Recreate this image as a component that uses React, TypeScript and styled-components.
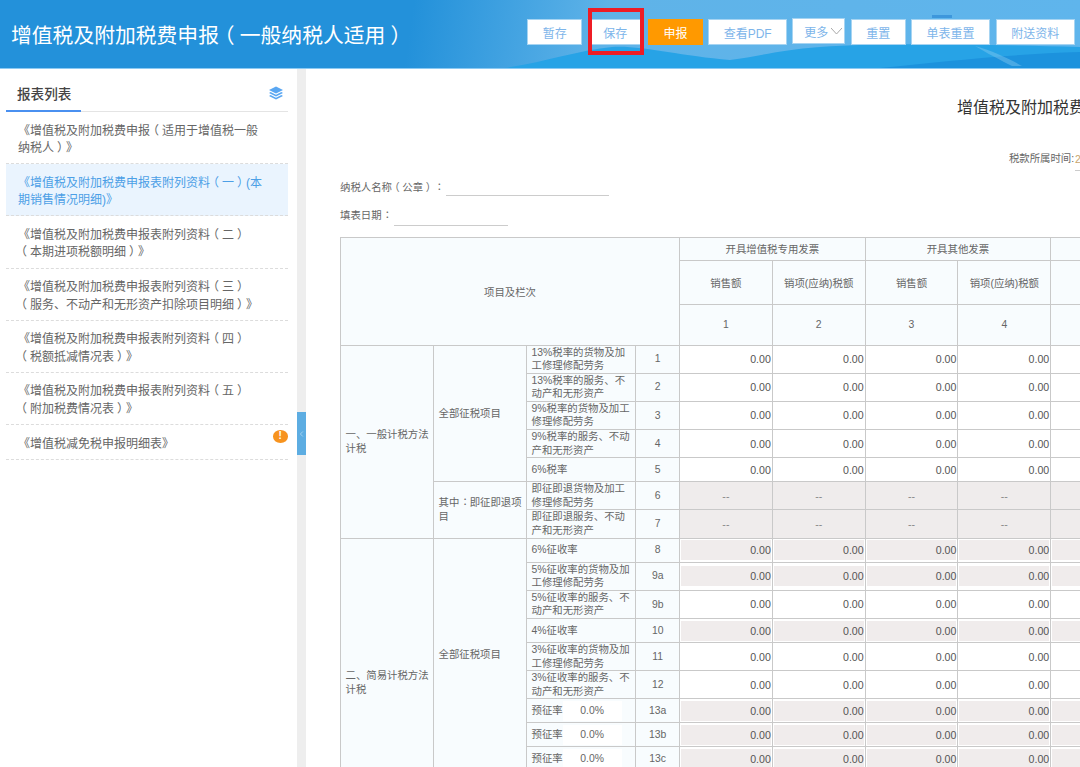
import React from 'react'
import styled, { createGlobalStyle } from 'styled-components'
import { ChevronLeft } from 'lucide-react'

const GlobalStyle = createGlobalStyle`
  html, body {
    margin: 0;
    padding: 0;
    height: 100%;
    overflow: hidden;
    background: #fff;
    font-family: "Liberation Sans", "Noto Sans CJK SC", sans-serif;
    text-spacing-trim: space-all;
  }
`

const Page = styled.div`
  display: flex;
  flex-direction: column;
  height: 767px;
  overflow: hidden;
`

const Header = styled.header`
  position: relative;
  flex: none;
  display: flex;
  align-items: center;
  justify-content: space-between;
  height: 68px;
  padding: 0 5px 0 11px;
  background: linear-gradient(98deg, #2391da 0%, #2391da 38%, #5fb3e8 56%, #5fb5ec 100%);
  border-bottom: 1px solid #8ccaf3;
`

const HeaderArt = styled.svg`
  position: absolute;
  left: 0;
  top: 0;
  width: 100%;
  height: 100%;
`

const HeaderTitle = styled.h1`
  position: relative;
  margin: 3px 0 0;
  font-size: 20.8px;
  font-weight: 400;
  line-height: 28px;
  color: #fff;
`

const Toolbar = styled.div`
  position: relative;
  display: flex;
  align-items: flex-start;
  gap: 5.4px;
  margin-bottom: 4px;
`

const ToolButton = styled.button<{ $w: number; $primary?: boolean }>`
  box-sizing: border-box;
  width: ${(p) => p.$w}px;
  height: 26.5px;
  padding: 0;
  font-family: inherit;
  font-size: 12px;
  color: ${(p) => (p.$primary ? '#fff' : '#7db5ea')};
  background: ${(p) => (p.$primary ? '#ff9900' : '#fff')};
  border: 1px solid ${(p) => (p.$primary ? '#ff9900' : '#a6d4f2')};
  cursor: pointer;
`

const MoreButton = styled(ToolButton)`
  display: flex;
  align-items: center;
  gap: 3px;
  margin-top: -1px;
  padding-left: 11px;

  svg {
    fill: none;
    stroke: #a8a8a8;
    stroke-width: 1;
  }
`

const Marked = styled.div`
  position: relative;

  &::after {
    content: '';
    position: absolute;
    top: -11px;
    right: -1px;
    bottom: -10px;
    left: 0;
    border: 4px solid #ee1c25;
    pointer-events: none;
  }
`

const Body = styled.div`
  flex: 1;
  display: flex;
  min-height: 0;
`

const Sidebar = styled.aside`
  flex: none;
  width: 297px;
  padding: 0 9px 0 6px;
  box-sizing: border-box;
  background: #fff;
`

const SidebarHead = styled.div`
  display: flex;
  align-items: center;
  justify-content: space-between;
  height: 43px;
  padding-right: 5px;
  border-bottom: 1px solid #e4e4e4;
  box-sizing: border-box;
`

const SidebarTab = styled.div`
  align-self: flex-end;
  margin-bottom: -1px;
  width: 75px;
  box-sizing: border-box;
  padding: 0 0 4px 11px;
  font-size: 13.6px;
  font-weight: 500;
  line-height: 23px;
  color: #444;
  border-bottom: 2px solid #4a90f0;
`

const StackGlyph = styled.svg`
  margin-top: 5px;
  fill: #5aa7f2;
`

const ReportList = styled.ul`
  margin: 0;
  padding: 0;
  list-style: none;
`

const ReportItem = styled.li<{ $active?: boolean }>`
  position: relative;
  padding: 10.5px 0 5.5px 12px;
  font-size: 12px;
  line-height: 17.6px;
  white-space: pre-line;
  color: ${(p) => (p.$active ? '#4c9fe6' : '#666')};
  background: ${(p) => (p.$active ? '#eaf4fe' : '#fff')};
  border-bottom: 1px dashed #dcdcdc;
`

const AlertBadge = styled.span`
  position: absolute;
  top: 5px;
  right: 0;
  width: 15.5px;
  height: 12.7px;
  border-radius: 50%;
  background: #f7931e;
  color: #fff;
  font-size: 10px;
  font-weight: 700;
  line-height: 12.7px;
  text-align: center;
`

const Divider = styled.div`
  position: relative;
  flex: none;
  width: 9px;
  background: #eee;
`

const CollapseHandle = styled.div`
  position: absolute;
  top: 343px;
  left: 0;
  display: flex;
  align-items: center;
  justify-content: center;
  width: 9px;
  height: 43px;
  background: #5dade2;
  color: #d5ebfa;
`

const Main = styled.main`
  flex: 1;
  min-width: 0;
  overflow: hidden;
  padding: 29px 0 0 34px;
  background: #fff;
`

const Sheet = styled.div`
  width: 1554px;
  color: #666;
  font-size: 10.4px;
`

const SheetTitle = styled.h2`
  margin: 0;
  font-size: 16px;
  font-weight: 400;
  line-height: 20px;
  text-align: center;
  color: #333;
`

const PeriodRow = styled.div`
  display: flex;
  justify-content: center;
  align-items: flex-end;
  margin-top: 32px;
  line-height: 16px;
`

const PeriodValue = styled.span`
  width: 150px;
  margin-left: 1px;
  margin-bottom: -4px;
  color: #c9a56b;
  border-bottom: 1px solid #ccc;
  line-height: 20px;
`

const FieldRow = styled.div<{ $top: number }>`
  display: flex;
  align-items: flex-start;
  gap: 2px;
  margin-top: ${(p) => p.$top}px;
  line-height: 18px;
`

const FieldLine = styled.span<{ $w: number; $h: number }>`
  width: ${(p) => p.$w}px;
  height: ${(p) => p.$h}px;
  border-bottom: 1px solid #ccc;
`

const Table = styled.table`
  width: 895.8px;
  margin-top: 11px;
  table-layout: fixed;
  border-collapse: collapse;
`

const Col = styled.col<{ $w: number }>`
  width: ${(p) => p.$w}px;
`

const HeadCell = styled.th<{ $h?: number }>`
  height: ${(p) => (p.$h ? `${p.$h}px` : 'auto')};
  padding: 0;
  font-weight: 400;
  text-align: center;
  background: #f8fcfe;
  border: 1px solid #c9c9c9;
`

const Row = styled.tr<{ $h: number }>`
  height: ${(p) => p.$h}px;
`

const LabelCell = styled.td`
  padding: 0 4px 0 4.5px;
  line-height: 13.6px;
  text-align: left;
  vertical-align: middle;
  background: #f8fcfe;
  border: 1px solid #c9c9c9;
`

const NumberCell = styled(LabelCell)`
  padding: 0;
  text-align: center;
`

const RateLine = styled.div`
  display: flex;
  align-items: center;
`

const RateBox = styled.span`
  width: 59px;
  height: 20px;
  line-height: 20px;
  text-align: center;
  background: #fff;
`

const ValueCell = styled.td<{ $blocked?: boolean }>`
  padding: 0 1px;
  font-size: 10.6px;
  text-align: ${(p) => (p.$blocked ? 'center' : 'right')};
  color: ${(p) => (p.$blocked ? '#888' : '#555')};
  background: ${(p) => (p.$blocked ? '#efecec' : '#fff')};
  border: 1px solid #c9c9c9;
`

const ValueBox = styled.div<{ $shaded?: boolean }>`
  height: 20px;
  line-height: 21px;
  background: ${(p) => (p.$shaded ? '#f0ecec' : '#fff')};
`

// the fullwidth marks sit in the middle of their em box in the reference font
const Mark = styled.span<{ $x: number; $y?: number }>`
  display: inline-block;
  transform: translate(${(p) => p.$x}em, ${(p) => p.$y ?? 0}em);
`

const markOffsets: Record<string, { x: number; y?: number }> = {
  '（': { x: -0.25 },
  '）': { x: 0.25 },
  '：': { x: 0.3, y: -0.05 }
}

const centered = (text: string) =>
  text.split(/([（）：])/).map((part, index) =>
    markOffsets[part] ? (
      <Mark key={index} $x={markOffsets[part].x} $y={markOffsets[part].y}>
        {part}
      </Mark>
    ) : (
      part
    )
  )

type Tone = 'open' | 'shaded' | 'blocked'

interface SheetRow {
  no: string
  label: string
  tone: Tone
  h: number
  rate?: boolean
  group?: { text: string; span: number }
  sub?: { text: string; span: number }
}

const reports = [
  '《增值税及附加税费申报（适用于增值税一般\n纳税人）》',
  '《增值税及附加税费申报表附列资料（一）(本\n期销售情况明细)》',
  '《增值税及附加税费申报表附列资料（二）\n（本期进项税额明细）》',
  '《增值税及附加税费申报表附列资料（三）\n（服务、不动产和无形资产扣除项目明细）》',
  '《增值税及附加税费申报表附列资料（四）\n（税额抵减情况表）》',
  '《增值税及附加税费申报表附列资料（五）\n（附加税费情况表）》',
  '《增值税减免税申报明细表》'
]

const sheetRows: SheetRow[] = [
  { no: '1', label: '13%税率的货物及加工修理修配劳务', tone: 'open', h: 28, group: { text: '一、一般计税方法计税', span: 7 }, sub: { text: '全部征税项目', span: 5 } },
  { no: '2', label: '13%税率的服务、不动产和无形资产', tone: 'open', h: 28 },
  { no: '3', label: '9%税率的货物及加工修理修配劳务', tone: 'open', h: 28 },
  { no: '4', label: '9%税率的服务、不动产和无形资产', tone: 'open', h: 28 },
  { no: '5', label: '6%税率', tone: 'open', h: 24 },
  { no: '6', label: '即征即退货物及加工修理修配劳务', tone: 'blocked', h: 28, sub: { text: '其中：即征即退项目', span: 2 } },
  { no: '7', label: '即征即退服务、不动产和无形资产', tone: 'blocked', h: 28 },
  { no: '8', label: '6%征收率', tone: 'shaded', h: 24, group: { text: '二、简易计税方法计税', span: 11 }, sub: { text: '全部征税项目', span: 9 } },
  { no: '9a', label: '5%征收率的货物及加工修理修配劳务', tone: 'shaded', h: 28 },
  { no: '9b', label: '5%征收率的服务、不动产和无形资产', tone: 'open', h: 28 },
  { no: '10', label: '4%征收率', tone: 'shaded', h: 24 },
  { no: '11', label: '3%征收率的货物及加工修理修配劳务', tone: 'open', h: 28 },
  { no: '12', label: '3%征收率的服务、不动产和无形资产', tone: 'open', h: 28 },
  { no: '13a', label: '预征率', tone: 'shaded', h: 24, rate: true },
  { no: '13b', label: '预征率', tone: 'shaded', h: 24, rate: true },
  { no: '13c', label: '预征率', tone: 'shaded', h: 24, rate: true },
  { no: '14', label: '即征即退货物及加工修理修配劳务', tone: 'blocked', h: 28, sub: { text: '其中：即征即退项目', span: 2 } },
  { no: '15', label: '即征即退服务、不动产和无形资产', tone: 'blocked', h: 28 }
]

const valueColumns = [0, 1, 2, 3, 4, 5]

const StackIcon = () => (
  <StackGlyph width="14" height="14" viewBox="0 0 14 14">
    <path d="M7 0.5 14 4 7 7.5 0 4Z" />
    <path d="M1.6 6 7 8.7 12.4 6 14 6.9 7 10.4 0 6.9Z" />
    <path d="M1.6 9 7 11.7 12.4 9 14 9.9 7 13.5 0 9.9Z" />
  </StackGlyph>
)

const App: React.FC = () => {
  return (
    <Page>
      <GlobalStyle />
      <Header>
        <HeaderArt viewBox="0 0 1080 68" preserveAspectRatio="none">
          <path d="M505 68 C545 62 580 50 612 47 C640 45 680 56 730 60 C760 56 780 50 820 47 C880 43 960 44 1080 47 V68Z" fill="#27a3e6" />
          <path d="M880 68 C940 62 1010 54 1080 52 V68Z" fill="#1c92dd" />
          <path d="M975 46 C990 50 1008 58 1022 66 H1012 C1000 60 985 52 975 46Z" fill="#8fcdf0" opacity="0.4" />
          <rect x="932" y="15" width="20" height="3" fill="#3d97dc" />
        </HeaderArt>
        <HeaderTitle>{centered('增值税及附加税费申报（一般纳税人适用）')}</HeaderTitle>
        <Toolbar>
          <ToolButton $w={55}>暂存</ToolButton>
          <Marked>
            <ToolButton $w={55}>保存</ToolButton>
          </Marked>
          <ToolButton $w={55} $primary>
            申报
          </ToolButton>
          <ToolButton $w={78.5}>查看PDF</ToolButton>
          <MoreButton $w={53}>
            更多
            <svg width="11" height="6" viewBox="0 0 11 6">
              <path d="M0 0 5.5 6 11 0" />
            </svg>
          </MoreButton>
          <ToolButton $w={55}>重置</ToolButton>
          <ToolButton $w={79}>单表重置</ToolButton>
          <ToolButton $w={79.5}>附送资料</ToolButton>
        </Toolbar>
      </Header>

      <Body>
        <Sidebar>
          <SidebarHead>
            <SidebarTab>报表列表</SidebarTab>
            <StackIcon />
          </SidebarHead>
          <ReportList>
            {reports.map((report, index) => (
              <ReportItem key={report} $active={index === 1}>
                {centered(report)}
                {index === reports.length - 1 && <AlertBadge>!</AlertBadge>}
              </ReportItem>
            ))}
          </ReportList>
        </Sidebar>

        <Divider>
          <CollapseHandle>
            <ChevronLeft size={10} strokeWidth={1.5} />
          </CollapseHandle>
        </Divider>

        <Main>
          <Sheet>
            <SheetTitle>{centered('增值税及附加税费申报表（一般纳税人适用）')}</SheetTitle>
            <PeriodRow>
              税款所属时间:
              <PeriodValue>2020-05-01 至 2020-05-31</PeriodValue>
            </PeriodRow>
            <FieldRow $top={12}>
              <span>{centered('纳税人名称（公章）：')}</span>
              <FieldLine $w={163} $h={16} />
            </FieldRow>
            <FieldRow $top={10}>
              <span>{centered('填表日期：')}</span>
              <FieldLine $w={114} $h={18} />
            </FieldRow>

            <Table>
              <colgroup>
                <Col $w={93} />
                <Col $w={93} />
                <Col $w={109.4} />
                <Col $w={43.6} />
                {valueColumns.map((col) => (
                  <Col key={col} $w={92.8} />
                ))}
              </colgroup>
              <thead>
                <tr>
                  <HeadCell colSpan={4} rowSpan={3}>
                    项目及栏次
                  </HeadCell>
                  <HeadCell colSpan={2} $h={21.5}>
                    开具增值税专用发票
                  </HeadCell>
                  <HeadCell colSpan={2}>开具其他发票</HeadCell>
                  <HeadCell colSpan={2}>未开具发票</HeadCell>
                </tr>
                <tr>
                  <HeadCell $h={43}>销售额</HeadCell>
                  <HeadCell>销项(应纳)税额</HeadCell>
                  <HeadCell>销售额</HeadCell>
                  <HeadCell>销项(应纳)税额</HeadCell>
                  <HeadCell>销售额</HeadCell>
                  <HeadCell>销项(应纳)税额</HeadCell>
                </tr>
                <tr>
                  {valueColumns.map((col) => (
                    <HeadCell key={col} $h={40}>
                      {col + 1}
                    </HeadCell>
                  ))}
                </tr>
              </thead>
              <tbody>
                {sheetRows.map((row) => (
                  <Row key={row.no} $h={row.h}>
                    {row.group && <LabelCell rowSpan={row.group.span}>{row.group.text}</LabelCell>}
                    {row.sub && <LabelCell rowSpan={row.sub.span}>{centered(row.sub.text)}</LabelCell>}
                    <LabelCell>
                      {row.rate ? (
                        <RateLine>
                          {row.label}
                          <RateBox>0.0%</RateBox>
                        </RateLine>
                      ) : (
                        row.label
                      )}
                    </LabelCell>
                    <NumberCell>{row.no}</NumberCell>
                    {valueColumns.map((col) =>
                      row.tone === 'blocked' ? (
                        <ValueCell key={col} $blocked>
                          --
                        </ValueCell>
                      ) : (
                        <ValueCell key={col}>
                          <ValueBox $shaded={row.tone === 'shaded'}>0.00</ValueBox>
                        </ValueCell>
                      )
                    )}
                  </Row>
                ))}
              </tbody>
            </Table>
          </Sheet>
        </Main>
      </Body>
    </Page>
  )
}

export default App
